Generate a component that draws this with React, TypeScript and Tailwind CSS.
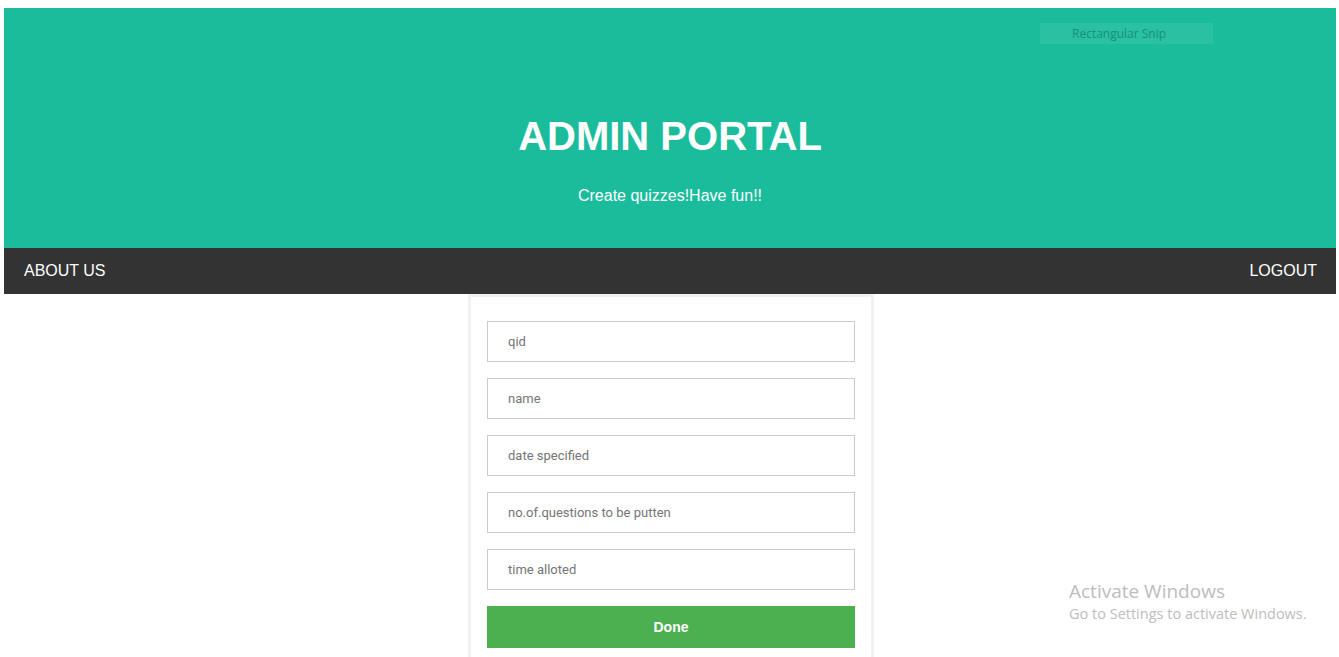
const fields = ["qid", "name", "date specified", "no.of.questions to be putten", "time alloted"];

export default function App() {
  return (
    <div className="relative h-[657px] overflow-hidden bg-white pl-1 pr-[3px] pt-2 font-['Liberation_Sans',Arial,sans-serif]">
      <header className="flex h-[240px] flex-col items-center bg-[#1abc9c] text-white">
        <h1 className="mt-[99px] text-[40px] font-bold leading-[58px]">ADMIN PORTAL</h1>
        <p className="mt-[21px] text-base leading-5">Create quizzes!Have fun!!</p>
      </header>

      <nav className="flex h-[46px] items-center justify-between bg-[#333333] pl-5 pr-[19px] text-base text-white">
        <a href="#">ABOUT US</a>
        <a href="#">LOGOUT</a>
      </nav>

      <div className="pl-[2px]">
        <div className="mx-auto w-[406px] border-[3px] border-b-0 border-[#f1f1f1] px-4 pt-6 pb-4">
          <form className="flex flex-col gap-4">
            {fields.map((f) => (
              <input
                key={f}
                placeholder={f}
                className="h-[41px] w-full border border-[#cccccc] px-5 font-['Roboto',Arial,sans-serif] text-[13px] text-[#333] placeholder:text-[#757575] outline-none"
              />
            ))}
            <button
              type="button"
              className="h-[42px] w-full bg-[#4caf50] text-[14px] font-bold text-white"
            >
              Done
            </button>
          </form>
        </div>
      </div>

      {/* snipping tool leftover */}
      <div className="absolute left-[1040px] top-[23px] flex h-[21px] w-[173px] items-center bg-[#2ac0a2] pl-8 font-['Open_Sans',sans-serif] text-[12px] text-[#14917a]">
        Rectangular Snip
      </div>

      <div className="absolute left-[1069px] top-[578px] font-['Open_Sans',sans-serif] text-[#bdbdbd]">
        <div className="text-[19px] leading-[26px]">Activate Windows</div>
        <div className="text-[14.5px] leading-[19px]">Go to Settings to activate Windows.</div>
      </div>
    </div>
  );
}
